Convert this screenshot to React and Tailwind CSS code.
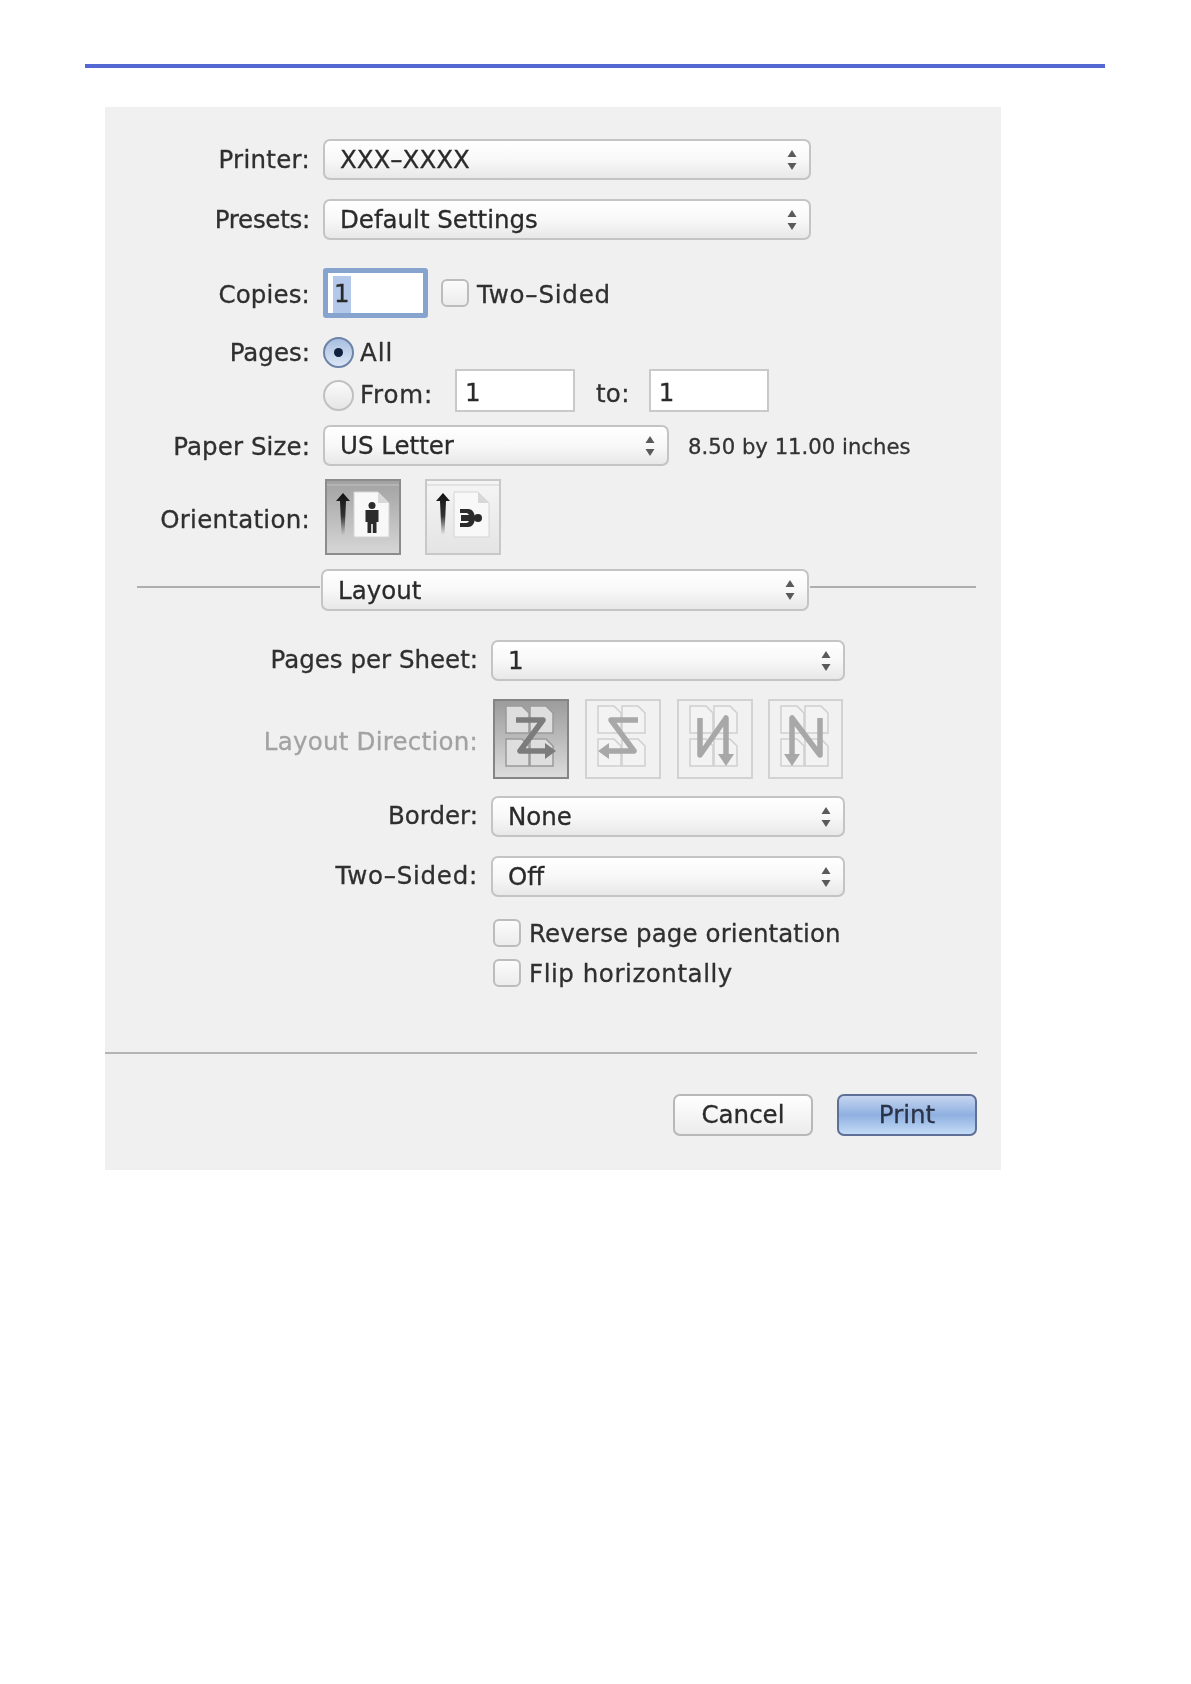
const font = { fontFamily: '"DejaVu Sans", sans-serif' };

function Stepper() {
  return (
    <svg width="10" height="24" viewBox="0 0 10 24" className="shrink-0">
      <path d="M5 2 L9.5 9 L0.5 9 Z" fill="#5a5a5a" />
      <path d="M5 22 L9.5 15 L0.5 15 Z" fill="#5a5a5a" />
    </svg>
  );
}

function Select({ label, className }) {
  return (
    <div className={`flex h-[41px] items-center justify-between rounded-[7px] border-2 border-[#c4c4c4] bg-gradient-to-b from-white via-[#f8f8f8] to-[#e8e8e8] pl-[15px] pr-[12px] text-[24.5px] text-[#2a2a2a] ${className}`}>
      <span className="pt-[2px]">{label}</span>
      <Stepper />
    </div>
  );
}

function Label({ children, className }) {
  return <div className={`shrink-0 text-right text-[24.5px] text-[#2f2f2f] ${className}`}>{children}</div>;
}

function Checkbox() {
  return <div className="h-[28px] w-[28px] shrink-0 rounded-[6px] border-2 border-[#bcbcbc] bg-gradient-to-b from-[#fbfbfb] to-[#ececec]" />;
}

function TextBox({ value }) {
  return (
    <div className="flex h-[43px] w-[120px] items-center border-2 border-[#c9c9c9] bg-white pl-[8px] pt-[6px] text-[24.5px] text-[#2a2a2a]">
      {value}
    </div>
  );
}

function OrientationIcon({ selected, rotated }) {
  const fade = selected ? "fadeA" : "fadeB";
  return (
    <div className={`h-[76px] w-[76px] border-2 ${selected ? "border-[#8c8c8c] bg-gradient-to-b from-[#a2a2a2] to-[#d6d6d6]" : "border-[#c8c8c8] bg-gradient-to-b from-[#f5f5f5] to-[#e4e4e4]"}`}>
      <svg width="72" height="72" viewBox="0 0 72 72">
        <defs>
          <linearGradient id={fade} x1="0" y1="0" x2="0" y2="1">
            <stop offset="0" stopColor="#111" />
            <stop offset="0.55" stopColor="#333" />
            <stop offset="1" stopColor="#444" stopOpacity="0" />
          </linearGradient>
        </defs>
        <rect x="0" y="3" width="72" height="2" fill={selected ? "#b4b4b4" : "#e2e2e2"} />
        <path d="M13 20 L14.5 54 L17.5 54 L19 20 L23 20 L16 12 L9 20 Z" fill={`url(#${fade})`} />
        <path d="M27 11 H51 L62 22 V56 H27 Z" fill="#f8f8f8" stroke="#d4d4d4" />
        <path d="M51 11 V22 H62 Z" fill="#d8d8d8" />
        {rotated ? (
          <g fill="#2b2b2b">
            <circle cx="51" cy="37" r="4" />
            <path d="M33 28 H41 C46 28 48 33 48 37 C48 41 46 46 41 46 H33 V42 H39 C41 42 42 40 42 40 H34 V34 H42 C42 34 41 32 39 32 H33 Z" />
          </g>
        ) : (
          <g fill="#2b2b2b">
            <circle cx="45" cy="24.5" r="3.5" />
            <path d="M38.5 29 H51.5 V41 H49.5 V52 H45.8 V43 H44.2 V52 H40.5 V41 H38.5 Z" />
          </g>
        )}
      </svg>
    </div>
  );
}

function DirectionIcon({ selected, path, arrow, className = "w-[76px]" }) {
  const pageStroke = selected ? "#9a9a9a" : "#cfcfcf";
  return (
    <div className={`h-[80px] border-2 ${className} ${selected ? "border-[#858585] bg-gradient-to-b from-[#9c9c9c] to-[#dcdcdc]" : "border-[#d2d2d2] bg-[#f1f1f1]"}`}>
      <svg width="71" height="76" viewBox="0 0 71 76">
        {[[11, 5], [35, 5], [11, 38], [35, 38]].map(([x, y]) => (
          <path
            key={`${x}-${y}`}
            d={`M${x} ${y} H${x + 16} L${x + 23} ${y + 7} V${y + 27} H${x} Z`}
            fill={selected ? "#dedede" : "#f3f3f3"}
            stroke={pageStroke}
            strokeWidth="1.5"
          />
        ))}
        <path d={path} fill="none" stroke={selected ? "#7c7c7c" : "#a8a8a8"} strokeWidth="5.5" strokeLinejoin="round" />
        <path d={arrow} fill={selected ? "#7c7c7c" : "#a8a8a8"} />
      </svg>
    </div>
  );
}

export default function App() {
  return (
    <div className="min-h-screen bg-white [-webkit-text-stroke:0.3px]" style={font}>
      <div className="ml-[85px] h-[64px]" />
      <div className="ml-[85px] h-[4px] w-[1020px] bg-[#5468d4]" />

      <div className="ml-[105px] mt-[39px] w-[896px] bg-[#f0f0f0] pb-[34px] pt-[32px] blur-[0.7px]">
        <div className="flex items-center gap-[13px]">
          <Label className="w-[205px] pt-[2px] tracking-[0.27px]">Printer:</Label>
          <Select label="XXX–XXXX" className="w-[488px]" />
        </div>
        <div className="mt-[19px] flex items-center gap-[13px]">
          <Label className="w-[205px] pt-[2px] tracking-[-0.27px]">Presets:</Label>
          <Select label="Default Settings" className="w-[488px]" />
        </div>

        <div className="mt-[28px] flex h-[50px] items-center gap-[13px]">
          <Label className="w-[205px] pt-[4px] tracking-[0.15px]">Copies:</Label>
          <div className="flex h-[50px] w-[105px] items-center rounded-[3px] border-[5px] border-[#86a4cd] bg-white pl-[5px] pt-[3px] text-[24.5px] text-[#2a2a2a]">
            <span className="bg-[#b4c9e9] px-[1px]">1</span>
          </div>
          <Checkbox />
          <span className="-ml-[5px] pt-[4px] text-[24.5px] tracking-[0.8px] text-[#2f2f2f]">Two–Sided</span>
        </div>

        <div className="mt-[19px] flex h-[31px] items-center gap-[13px]">
          <Label className="w-[205px] pt-[2px]">Pages:</Label>
          <div className="flex h-[31px] w-[31px] items-center justify-center rounded-full border-2 border-[#6d83a8] bg-gradient-to-b from-[#a9bfe0] to-[#dbe6f5]">
            <div className="h-[9px] w-[9px] rounded-full bg-[#10213f]" />
          </div>
          <span className="-ml-[7px] pt-[2px] text-[24.5px] tracking-[1px] text-[#2f2f2f]">All</span>
        </div>

        <div className="mt-[1px] flex h-[43px] items-center pl-[218px]">
          <div className="mt-[10px] h-[31px] w-[31px] rounded-full border-2 border-[#c0c0c0] bg-gradient-to-b from-[#fafafa] to-[#e6e6e6]" />
          <span className="ml-[6px] mt-[10px] text-[24.5px] tracking-[0.8px] text-[#2f2f2f]">From:</span>
          <div className="ml-[22px]">
            <TextBox value="1" />
          </div>
          <span className="ml-[21px] mt-[8px] text-[24.5px] tracking-[0.3px] text-[#2f2f2f]">to:</span>
          <div className="ml-[19px]">
            <TextBox value="1" />
          </div>
        </div>

        <div className="mt-[13px] flex items-center gap-[13px]">
          <Label className="w-[205px] pt-[4px] tracking-[0.1px]">Paper Size:</Label>
          <Select label="US Letter" className="w-[346px]" />
          <span className="ml-[6px] pt-[2px] text-[21.2px] text-[#333]">8.50 by 11.00 inches</span>
        </div>

        <div className="mt-[13px] flex h-[76px] items-center">
          <Label className="w-[205px] pt-[6px] tracking-[0.27px]">Orientation:</Label>
          <div className="ml-[15px]">
            <OrientationIcon selected />
          </div>
          <div className="ml-[24px]">
            <OrientationIcon rotated />
          </div>
        </div>

        <div className="mt-[14px] flex items-center">
          <div className="mb-[6px] ml-[32px] h-[2px] w-[183px] bg-[#aeaeae]" />
          <Select label="Layout" className="ml-[1px] !h-[42px] w-[488px]" />
          <div className="mb-[6px] ml-[1px] h-[2px] w-[166px] bg-[#aeaeae]" />
        </div>

        <div className="mt-[29px] flex items-center gap-[13px]">
          <Label className="w-[373px]">Pages per Sheet:</Label>
          <Select label="1" className="w-[354px]" />
        </div>

        <div className="mt-[18px] flex h-[80px] items-center">
          <Label className="w-[373px] pt-[6px] tracking-[0.25px] !text-[#a2a2a2]">Layout Direction:</Label>
          <div className="ml-[15px] flex gap-[16px]">
            <DirectionIcon selected path="M21 19 H48 L25 50 H52" arrow="M50 42 L61 50 L50 58 Z" />
            <DirectionIcon path="M51 19 H24 L47 50 H21" arrow="M22 42 L11 50 L22 58 Z" />
            <DirectionIcon path="M21 17 V54 L47 17 V56" arrow="M39 53 L47 65 L55 53 Z" />
            <DirectionIcon className="-ml-[1px] w-[75px]" path="M50 17 V54 L22 17 V56" arrow="M14 53 L22 65 L30 53 Z" />
          </div>
        </div>

        <div className="mt-[17px] flex items-center gap-[13px]">
          <Label className="w-[373px]">Border:</Label>
          <Select label="None" className="w-[354px]" />
        </div>
        <div className="mt-[19px] flex items-center gap-[13px]">
          <Label className="w-[373px] tracking-[0.75px]">Two–Sided:</Label>
          <Select label="Off" className="w-[354px]" />
        </div>

        <div className="ml-[388px] mt-[22px] flex h-[28px] items-center gap-[8px]">
          <Checkbox />
          <span className="pt-[2px] text-[24.5px] tracking-[0.1px] text-[#2f2f2f]">Reverse page orientation</span>
        </div>
        <div className="ml-[388px] mt-[12px] flex h-[28px] items-center gap-[8px]">
          <Checkbox />
          <span className="pt-[2px] text-[24.5px] tracking-[0.55px] text-[#2f2f2f]">Flip horizontally</span>
        </div>

        <div className="mt-[65px] h-[2px] w-[872px] bg-[#b4b4b4]" />

        <div className="mt-[40px] flex w-[872px] justify-end gap-[24px]">
          <div className="flex h-[42px] w-[140px] items-center justify-center rounded-[7px] border-2 border-[#b8b8b8] bg-gradient-to-b from-white to-[#ececec] text-[24.5px] text-[#2a2a2a]">
            Cancel
          </div>
          <div className="flex h-[42px] w-[140px] items-center justify-center rounded-[7px] border-2 border-[#5f6f97] bg-gradient-to-b from-[#c6d5f0] via-[#8fb0e0] to-[#c3dbf6] text-[24.5px] text-[#2a3347]">
            Print
          </div>
        </div>
      </div>
    </div>
  );
}
